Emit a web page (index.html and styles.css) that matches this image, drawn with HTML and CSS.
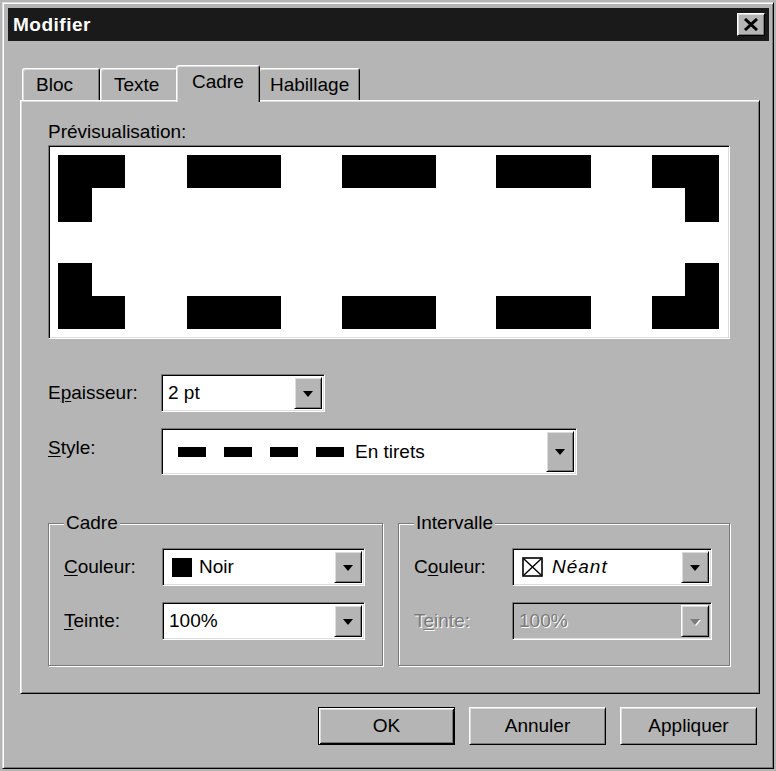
FILE: index.html
```html
<!DOCTYPE html>
<html lang="fr">
<head>
    <meta charset="UTF-8">
    <title>Modifier</title>
    <link rel="stylesheet" href="styles.css">
</head>
<body>

    <div class="window">
        <!-- Barre de titre -->
        <div class="titlebar">
            <span class="title">Modifier</span>
            <div class="close raised">
                <svg width="16" height="13" viewBox="0 0 16 13">
                    <path d="M2 1 L14 12 M14 1 L2 12" stroke="#000" stroke-width="3" fill="none"/>
                </svg>
            </div>
        </div>

        <!-- Onglets -->
        <div class="tabs">
            <div class="tab tab-bloc">Bloc</div>
            <div class="tab tab-texte">Texte</div>
            <div class="tab tab-cadre active">Cadre</div>
            <div class="tab tab-habillage">Habillage</div>
        </div>

        <div class="panel">
            <div class="caption">Prévisualisation:</div>
            <div class="preview sunken">
                <svg width="677" height="190" viewBox="0 0 677 190">
                    <g fill="#000">
                        <rect x="8" y="8" width="67" height="33"/>
                        <rect x="8" y="8" width="34" height="67"/>
                        <rect x="137" y="8" width="94" height="33"/>
                        <rect x="292" y="8" width="94" height="33"/>
                        <rect x="446" y="8" width="95" height="33"/>
                        <rect x="602" y="8" width="67" height="33"/>
                        <rect x="635" y="8" width="34" height="67"/>

                        <rect x="8" y="149" width="67" height="33"/>
                        <rect x="8" y="116" width="34" height="66"/>
                        <rect x="137" y="149" width="94" height="33"/>
                        <rect x="292" y="149" width="94" height="33"/>
                        <rect x="446" y="149" width="95" height="33"/>
                        <rect x="602" y="149" width="67" height="33"/>
                        <rect x="635" y="116" width="34" height="66"/>
                    </g>
                </svg>
            </div>

            <div class="row row-epaisseur">
                <label class="label">E<u>p</u>aisseur:</label>
                <div class="combo combo-epaisseur sunken">
                    <div class="combo-value">2 pt</div>
                    <div class="combo-btn raised"><span class="arrow"></span></div>
                </div>
            </div>

            <div class="row row-style">
                <label class="label"><u>S</u>tyle:</label>
                <div class="combo combo-style sunken">
                    <div class="combo-value">
                        <span class="dash"></span>
                        <span class="dash"></span>
                        <span class="dash"></span>
                        <span class="dash"></span>
                        <span class="dash-text">En tirets</span>
                    </div>
                    <div class="combo-btn raised"><span class="arrow"></span></div>
                </div>
            </div>

            <div class="groups">
                <div class="group">
                    <div class="group-title">Cadre</div>
                    <div class="group-row">
                        <label class="group-label"><u>C</u>ouleur:</label>
                        <div class="combo sunken">
                            <div class="combo-value"><span class="swatch"></span>Noir</div>
                            <div class="combo-btn raised"><span class="arrow"></span></div>
                        </div>
                    </div>
                    <div class="group-row">
                        <label class="group-label"><u>T</u>einte:</label>
                        <div class="combo sunken">
                            <div class="combo-value">100%</div>
                            <div class="combo-btn raised"><span class="arrow"></span></div>
                        </div>
                    </div>
                </div>

                <div class="group">
                    <div class="group-title">Intervalle</div>
                    <div class="group-row">
                        <label class="group-label">C<u>o</u>uleur:</label>
                        <div class="combo sunken">
                            <div class="combo-value">
                                <svg class="none-icon" width="21" height="20" viewBox="0 0 21 20">
                                    <rect x="1" y="1" width="19" height="18" fill="#fff" stroke="#000" stroke-width="1.6"/>
                                    <path d="M2 2 L19 18 M19 2 L2 18" stroke="#000" stroke-width="1.4"/>
                                </svg>
                                <span class="none-text">Néant</span>
                            </div>
                            <div class="combo-btn raised"><span class="arrow"></span></div>
                        </div>
                    </div>
                    <div class="group-row disabled">
                        <label class="group-label">T<u>e</u>inte:</label>
                        <div class="combo sunken">
                            <div class="combo-value">100%</div>
                            <div class="combo-btn raised"><span class="arrow"></span></div>
                        </div>
                    </div>
                </div>
            </div>
        </div>

        <!-- Boutons -->
        <div class="actions">
            <button class="btn btn-default">OK</button>
            <button class="btn">Annuler</button>
            <button class="btn">Appliquer</button>
        </div>
    </div>

</body>
</html>
```

FILE: styles.css
```css
/* Boite de dialogue style Windows 95 */
body {
    font-family: "Liberation Sans", Arial, sans-serif;
    font-size: 19px;
    color: #000;
    margin: 0;
    padding: 0;
    background-color: #b5b5b5;
}

.window {
    width: 772px;
    height: 767px;
    margin: 2px;
    box-sizing: border-box;
    padding: 5px 4px 0 5px;
    border: 1px solid;
    border-color: #dcdcdc #000 #000 #dcdcdc;
    box-shadow: inset 1px 1px #fff, inset -1px -1px #7a7a7a;
}

.raised {
    background-color: #b5b5b5;
    border: 1px solid;
    border-color: #fff #000 #000 #fff;
    box-shadow: inset 1px 1px #dcdcdc, inset -1px -1px #7a7a7a;
    box-sizing: border-box;
}

.sunken {
    background-color: #fff;
    border: 1px solid;
    border-color: #7a7a7a #fff #fff #7a7a7a;
    box-shadow: inset 1px 1px #000, inset -1px -1px #dcdcdc;
    box-sizing: border-box;
}

/* Barre de titre */
.titlebar {
    height: 33px;
    background-color: #1a1a1a;
    display: flex;
    align-items: center;
    justify-content: space-between;
    padding-left: 5px;
}

.title {
    color: #fff;
    font-weight: bold;
    letter-spacing: 0.5px;
}

.close {
    width: 28px;
    height: 23px;
    margin-right: 4px;
    display: flex;
    align-items: center;
    justify-content: center;
}

/* Onglets */
.tabs {
    display: flex;
    align-items: flex-end;
    height: 35px;
    margin-top: 24px;
    margin-left: 14px;
}

.tab {
    height: 32px;
    line-height: 31px;
    padding-left: 13px;
    box-sizing: border-box;
    border: 1px solid;
    border-bottom: none;
    border-color: #fff #000 transparent #fff;
    border-radius: 3px 3px 0 0;
    box-shadow: inset 1px 1px #dcdcdc, inset -1px 0 #7a7a7a;
}

.tab-bloc { width: 78px; }
.tab-texte { width: 78px; }
.tab-cadre { width: 84px; }
.tab-habillage { width: 102px; padding-left: 11px; }

.tab.active {
    position: relative;
    height: 37px;
    line-height: 32px;
    padding-left: 15px;
    margin: 0 -2px -2px;
    background-color: #b5b5b5;
}

/* Panneau */
.panel {
    width: 740px;
    height: 594px;
    margin-left: 12px;
    box-sizing: border-box;
    padding: 20px 29px 0 27px;
    border: 1px solid;
    border-color: #fff #000 #000 #fff;
    box-shadow: inset 1px 1px #dcdcdc, inset -1px -1px #7a7a7a;
}

.caption {
    line-height: 22px;
}

.preview {
    height: 194px;
    margin-top: 2px;
    padding: 1px;
}

.preview svg {
    display: block;
}

.row {
    display: flex;
    align-items: center;
}

.row-epaisseur {
    margin-top: 35px;
}

.row-style {
    margin-top: 16px;
}

.row-style .label {
    margin-bottom: 7px;
}

.label {
    width: 113px;
}

u {
    text-decoration-thickness: 1px;
    text-underline-offset: 2px;
}

/* Listes deroulantes */
.combo {
    height: 38px;
    padding: 2px;
    display: flex;
}

.combo-epaisseur {
    width: 164px;
}

.combo-style {
    width: 416px;
    height: 47px;
}

.combo-value {
    flex: 1;
    display: flex;
    align-items: center;
    padding-left: 4px;
    white-space: nowrap;
}

.combo-btn {
    width: 28px;
    display: flex;
    align-items: center;
    justify-content: center;
}

.arrow {
    width: 0;
    height: 0;
    border-left: 5px solid transparent;
    border-right: 5px solid transparent;
    border-top: 6px solid #000;
    margin-top: 1px;
}

.dash {
    width: 28px;
    height: 10px;
    background-color: #000;
    margin-right: 18px;
}

.combo-style .combo-value {
    padding-left: 14px;
}

.dash:nth-child(4) {
    margin-right: 11px;
}

.swatch {
    width: 20px;
    height: 19px;
    background-color: #000;
    margin: 0 7px 0 3px;
}

.none-icon {
    margin: 0 9px 0 3px;
}

.none-text {
    font-style: italic;
    letter-spacing: 1px;
}

/* Groupes */
.groups {
    display: grid;
    grid-template-columns: 335px 1fr;
    gap: 15px;
    margin-top: 48px;
}

.group {
    border: 1px solid #7a7a7a;
    box-shadow: inset 1px 1px #fff, 1px 1px #fff;
    padding: 0 17px 25px 15px;
}

.group-title {
    width: fit-content;
    line-height: 22px;
    margin: -12px 0 0 0;
    padding: 0 2px;
    background-color: #b5b5b5;
}

.group-row {
    display: flex;
    align-items: center;
    margin-top: 14px;
}

.group-row + .group-row {
    margin-top: 16px;
}

.group-label {
    width: 98px;
}

.group-row .combo {
    flex: 1;
}

.disabled .group-label,
.disabled .combo-value {
    color: #7a7a7a;
    text-shadow: 1px 1px #fff;
}

.disabled .combo {
    background-color: #b5b5b5;
}

.disabled .arrow {
    border-top-color: #7a7a7a;
    filter: drop-shadow(1px 1px 0 #fff);
}

/* Boutons du bas */
.actions {
    display: flex;
    justify-content: flex-end;
    gap: 14px;
    margin-top: 13px;
    padding-right: 12px;
}

.btn {
    width: 137px;
    height: 38px;
    font-family: inherit;
    font-size: 19px;
    color: #000;
    background-color: #b5b5b5;
    border: 1px solid;
    border-color: #fff #000 #000 #fff;
    box-shadow: inset 1px 1px #dcdcdc, inset -1px -1px #7a7a7a;
    padding: 0;
}

.btn-default {
    border-color: #000;
    box-shadow: inset 1px 1px #fff, inset -1px -1px #000, inset 2px 2px #dcdcdc, inset -2px -2px #7a7a7a;
}
```
